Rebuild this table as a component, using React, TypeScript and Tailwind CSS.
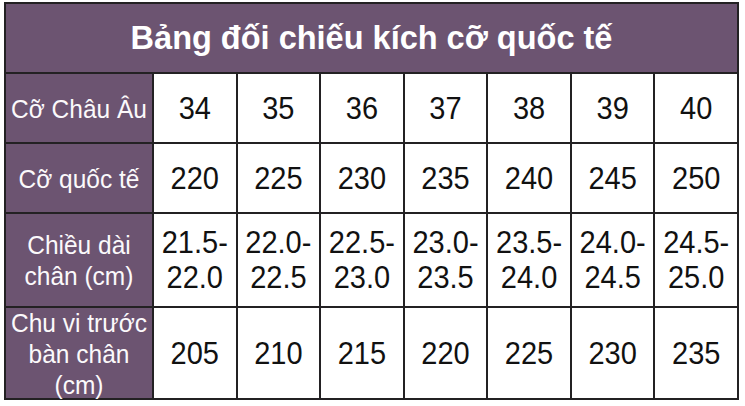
import React from "react";

const sizes = ["34", "35", "36", "37", "38", "39", "40"];
const intl = ["220", "225", "230", "235", "240", "245", "250"];
const lengths: [string, string][] = [
  ["21.5-", "22.0"],
  ["22.0-", "22.5"],
  ["22.5-", "23.0"],
  ["23.0-", "23.5"],
  ["23.5-", "24.0"],
  ["24.0-", "24.5"],
  ["24.5-", "25.0"],
];
const girth = ["205", "210", "215", "220", "225", "230", "235"];

const font = { fontFamily: '"Liberation Sans", Arial, sans-serif' };

function Label({ children }: { children: React.ReactNode }) {
  return (
    <div className="bg-[#6c5471] text-[#fbf9fb] text-[24.5px] leading-[29px] flex items-center justify-center text-center">
      <div className="scale-y-[1.07]">{children}</div>
    </div>
  );
}

function Num({ children }: { children: React.ReactNode }) {
  return (
    <div className="bg-white text-[#111] text-[29px] leading-[33px] flex items-center justify-center text-center">
      <div className="scale-y-[1.06]">{children}</div>
    </div>
  );
}

export default function App() {
  return (
    <div className="w-[745px] h-[406px] bg-white pt-[2px] pl-[4px]" style={font}>
      <div className="w-[735px] grid grid-cols-[146px_repeat(7,1fr)] grid-rows-[68px_68px_68px_92px_90px] gap-[2px] p-[2px] bg-[#232123]">
        <div className="col-span-8 bg-[#6c5471] text-white font-bold text-[32.5px] flex items-center justify-center">
          Bảng đối chiếu kích cỡ quốc tế
        </div>

        <Label>Cỡ Châu Âu</Label>
        {sizes.map((s) => (
          <Num key={"s" + s}>{s}</Num>
        ))}

        <Label>Cỡ quốc tế</Label>
        {intl.map((s) => (
          <Num key={"i" + s}>{s}</Num>
        ))}

        <Label>
          Chiều dài
          <br />
          chân (cm)
        </Label>
        {lengths.map(([a, b]) => (
          <Num key={"l" + a}>
            {a}
            <br />
            {b}
          </Num>
        ))}

        <Label>
          Chu vi trước
          <br />
          bàn chân
          <br />
          (cm)
        </Label>
        {girth.map((s) => (
          <Num key={"g" + s}>{s}</Num>
        ))}
      </div>
    </div>
  );
}
